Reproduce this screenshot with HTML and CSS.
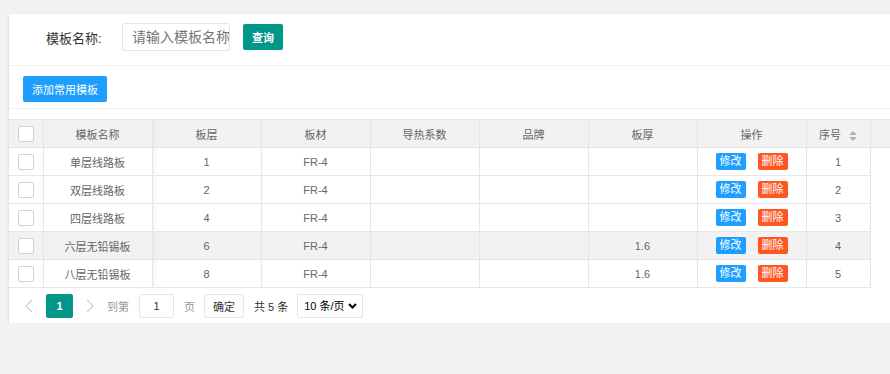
FILE: index.html
```html
<!DOCTYPE html>
<html lang="zh-CN">
<head>
  <meta charset="UTF-8">
  <title>常用模板</title>
  <link rel="stylesheet" href="styles.css">
</head>
<body>
  <div class="card">
    <form class="search-bar">
      <label class="search-label" for="tplName">模板名称:</label>
      <input type="text" id="tplName" class="search-input" placeholder="请输入模板名称">
      <button type="button" class="btn btn-green">查询</button>
    </form>

    <div class="toolbar">
      <button type="button" class="btn btn-blue">添加常用模板</button>
    </div>

    <table class="grid">
      <colgroup>
        <col class="c-check">
        <col class="c-wide">
        <col class="c-wide">
        <col class="c-wide">
        <col class="c-wide">
        <col class="c-wide">
        <col class="c-wide">
        <col class="c-wide">
        <col class="c-seq">
        <col>
      </colgroup>
      <thead>
        <tr>
          <th><span class="checkbox"></span></th>
          <th class="fixed-edge">模板名称</th>
          <th class="after-fixed">板层</th>
          <th>板材</th>
          <th>导热系数</th>
          <th>品牌</th>
          <th>板厚</th>
          <th>操作</th>
          <th>序号
            <span class="sort">
              <span class="sort-up"></span>
              <span class="sort-down"></span>
            </span>
          </th>
          <th class="filler"></th>
        </tr>
      </thead>
      <tbody>
        <tr>
          <td><span class="checkbox"></span></td>
          <td class="fixed-edge">单层线路板</td>
          <td class="after-fixed">1</td>
          <td>FR-4</td>
          <td></td>
          <td></td>
          <td></td>
          <td><span class="tag tag-blue">修改</span><span class="tag tag-red">删除</span></td>
          <td>1</td>
          <td class="filler"></td>
        </tr>
        <tr>
          <td><span class="checkbox"></span></td>
          <td class="fixed-edge">双层线路板</td>
          <td class="after-fixed">2</td>
          <td>FR-4</td>
          <td></td>
          <td></td>
          <td></td>
          <td><span class="tag tag-blue">修改</span><span class="tag tag-red">删除</span></td>
          <td>2</td>
          <td class="filler"></td>
        </tr>
        <tr>
          <td><span class="checkbox"></span></td>
          <td class="fixed-edge">四层线路板</td>
          <td class="after-fixed">4</td>
          <td>FR-4</td>
          <td></td>
          <td></td>
          <td></td>
          <td><span class="tag tag-blue">修改</span><span class="tag tag-red">删除</span></td>
          <td>3</td>
          <td class="filler"></td>
        </tr>
        <tr class="hover">
          <td><span class="checkbox"></span></td>
          <td class="fixed-edge">六层无铅锡板</td>
          <td class="after-fixed">6</td>
          <td>FR-4</td>
          <td></td>
          <td></td>
          <td>1.6</td>
          <td><span class="tag tag-blue">修改</span><span class="tag tag-red">删除</span></td>
          <td>4</td>
          <td class="filler"></td>
        </tr>
        <tr>
          <td><span class="checkbox"></span></td>
          <td class="fixed-edge">八层无铅锡板</td>
          <td class="after-fixed">8</td>
          <td>FR-4</td>
          <td></td>
          <td></td>
          <td>1.6</td>
          <td><span class="tag tag-blue">修改</span><span class="tag tag-red">删除</span></td>
          <td>5</td>
          <td class="filler"></td>
        </tr>
      </tbody>
    </table>

    <div class="pager">
      <span class="pager-arrow">
        <svg width="8" height="14" viewBox="0 0 8 14"><path d="M7 1 1 7l6 6" fill="none" stroke="#d2d2d2" stroke-width="1.3"/></svg>
      </span>
      <span class="pager-current">1</span>
      <span class="pager-arrow">
        <svg width="8" height="14" viewBox="0 0 8 14"><path d="m1 1 6 6-6 6" fill="none" stroke="#d2d2d2" stroke-width="1.3"/></svg>
      </span>
      <span class="pager-muted">到第</span>
      <input type="text" class="pager-input" value="1">
      <span class="pager-muted">页</span>
      <button type="button" class="pager-btn">确定</button>
      <span class="pager-count">共 5 条</span>
      <span class="select-wrap">
        <select class="pager-select">
          <option>10 条/页</option>
          <option>20 条/页</option>
          <option>30 条/页</option>
        </select>
        <svg class="select-caret" width="9" height="6" viewBox="0 0 9 6"><path d="M1 1l3.5 3.5L8 1" fill="none" stroke="#000" stroke-width="2"/></svg>
      </span>
    </div>
  </div>
</body>
</html>
```

FILE: styles.css
```css
body {
  margin: 0;
  padding: 14px 0 0 9px;
  background-color: #f2f2f2;
  font-family: "Liberation Sans", "Noto Sans CJK SC", sans-serif;
  color: #666;
  overflow: hidden;
}
.card {
  width: 900px;
  background: #fff;
  box-shadow: 0 1px 3px rgba(0, 0, 0, 0.14);
}

/* search bar */
.search-bar {
  display: flex;
  align-items: center;
  padding: 9px 0 14px 37px;
  border-bottom: 1px solid #f2f2f2;
}
.search-label {
  width: 76px;
  font-size: 13px;
  color: #333;
}
.search-input {
  box-sizing: border-box;
  width: 108px;
  height: 28px;
  padding: 0 0 0 9px;
  border: 1px solid #e6e6e6;
  border-radius: 2px;
  font-family: inherit;
  font-size: 14px;
  color: #333;
  outline: none;
}
.search-input::placeholder {
  color: #757575;
}
.btn {
  height: 26px;
  padding: 0 9px;
  border: none;
  border-radius: 2px;
  color: #fff;
  font-family: inherit;
  font-size: 11px;
  cursor: pointer;
}
.btn-green {
  margin-left: 13px;
  background-color: #009688;
  font-weight: bold;
}
.btn-blue {
  background-color: #1e9fff;
}

/* toolbar */
.toolbar {
  padding: 10px 14px 6px;
  border-bottom: 1px solid #f2f2f2;
  margin-bottom: 10px;
}

/* table */
.grid {
  width: 100%;
  border-collapse: collapse;
  table-layout: fixed;
  font-size: 11px;
}
.c-check { width: 34px; }
.c-wide { width: 109px; }
.c-seq { width: 64px; }
.grid th,
.grid td {
  height: 27px;
  padding: 0;
  border: 1px solid #e6e6e6;
  text-align: center;
  vertical-align: middle;
  font-weight: normal;
  white-space: nowrap;
}
.grid th {
  background-color: #f2f2f2;
}
.grid th:first-child,
.grid td:first-child {
  border-left: none;
}
.grid .filler {
  border-right: none;
}
.grid td.filler {
  border-top: none;
  border-bottom: none;
}
.grid tr.hover td:not(.filler) {
  background-color: #f2f2f2;
}
.grid .after-fixed {
  background-image: linear-gradient(to right, rgba(0, 0, 0, 0.04), rgba(0, 0, 0, 0) 5px);
}
.checkbox {
  display: inline-block;
  box-sizing: border-box;
  width: 16px;
  height: 16px;
  border: 1px solid #d2d2d2;
  border-radius: 2px;
  background: #fff;
  vertical-align: middle;
}
.sort {
  display: inline-flex;
  flex-direction: column;
  gap: 2px;
  margin-left: 5px;
  vertical-align: middle;
}
.sort-up,
.sort-down {
  width: 0;
  height: 0;
  border-left: 4px solid transparent;
  border-right: 4px solid transparent;
}
.sort-up {
  border-bottom: 4px solid #b2b2b2;
}
.sort-down {
  border-top: 4px solid #b2b2b2;
}
.tag {
  display: inline-block;
  height: 17px;
  line-height: 17px;
  padding: 0 4px;
  border-radius: 2px;
  color: #fff;
  vertical-align: middle;
}
.tag-blue {
  background-color: #1e9fff;
  margin-right: 12px;
}
.tag-red {
  background-color: #ff5722;
}

/* pager */
.pager {
  display: flex;
  align-items: center;
  height: 35px;
  padding-left: 9px;
  font-size: 11px;
}
.pager-arrow {
  display: flex;
  align-items: center;
  justify-content: center;
  width: 22px;
}
.pager-current {
  width: 27px;
  height: 24px;
  line-height: 24px;
  margin: 0 6px;
  text-align: center;
  background-color: #009688;
  color: #fff;
  font-weight: bold;
  border-radius: 2px;
}
.pager-muted {
  color: #999;
  font-size: 11px;
}
.pager-arrow + .pager-muted {
  margin-left: 6px;
}
.pager-input {
  box-sizing: border-box;
  width: 35px;
  height: 24px;
  margin: 0 10px;
  border: 1px solid #e6e6e6;
  border-radius: 2px;
  text-align: center;
  font-family: inherit;
  font-size: 11px;
  color: #333;
}
.pager-btn {
  height: 24px;
  width: 40px;
  margin-left: 9px;
  padding: 0;
  border: 1px solid #e6e6e6;
  border-radius: 2px;
  background: #fff;
  font-family: inherit;
  font-size: 11px;
  color: #333;
}
.pager-count {
  margin-left: 10px;
  color: #333;
}
.select-wrap {
  position: relative;
  margin-left: 9px;
}
.pager-select {
  appearance: none;
  box-sizing: border-box;
  width: 66px;
  height: 24px;
  padding: 0 0 0 6px;
  border: 1px solid #e6e6e6;
  border-radius: 2px;
  background: #fff;
  font-family: inherit;
  font-size: 11px;
  color: #000;
}
.select-caret {
  position: absolute;
  right: 6px;
  top: 9px;
  pointer-events: none;
}
```
